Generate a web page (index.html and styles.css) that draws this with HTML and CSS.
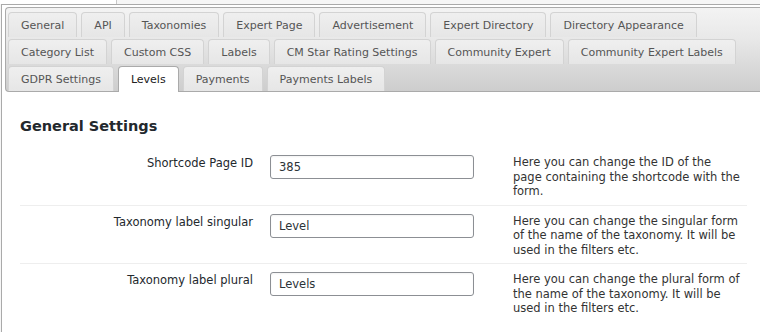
FILE: index.html
```html
<!DOCTYPE html>
<html>
<head>
<meta charset="utf-8">
<link rel="stylesheet" href="styles.css">
</head>
<body>
<div class="topbar"><div class="topbox"></div></div>
<div class="tabs">
  <ul class="nav">
    <li class="tab">General</li>
    <li class="tab">API</li>
    <li class="tab">Taxonomies</li>
    <li class="tab">Expert Page</li>
    <li class="tab">Advertisement</li>
    <li class="tab">Expert Directory</li>
    <li class="tab">Directory Appearance</li>
    <li class="tab">Category List</li>
    <li class="tab">Custom CSS</li>
    <li class="tab">Labels</li>
    <li class="tab">CM Star Rating Settings</li>
    <li class="tab">Community Expert</li>
    <li class="tab">Community Expert Labels</li>
    <li class="tab">GDPR Settings</li>
    <li class="tab active">Levels</li>
    <li class="tab">Payments</li>
    <li class="tab">Payments Labels</li>
  </ul>
  <div class="panel">
    <h3 class="heading">General Settings</h3>
    <div class="form">
      <div class="row">
        <div class="label">Shortcode Page ID</div>
        <div class="field"><input class="input" type="text" value="385"></div>
        <div class="desc">Here you can change the ID of the page containing the shortcode with the form.</div>
      </div>
      <div class="row">
        <div class="label">Taxonomy label singular</div>
        <div class="field"><input class="input" type="text" value="Level"></div>
        <div class="desc">Here you can change the singular form of the name of the taxonomy. It will be used in the filters etc.</div>
      </div>
      <div class="row">
        <div class="label">Taxonomy label plural</div>
        <div class="field"><input class="input" type="text" value="Levels"></div>
        <div class="desc">Here you can change the plural form of the name of the taxonomy. It will be used in the filters etc.</div>
      </div>
    </div>
  </div>
</div>
</body>
</html>
```

FILE: styles.css
```css
html, body {
  margin: 0;
  padding: 0;
  background: #f6f6f6;
  font-family: "DejaVu Sans", Verdana, sans-serif;
  overflow: hidden;
}
.topbar {
  height: 4px;
  display: flex;
}
.topbox {
  width: 116px;
  height: 4px;
  background: #fff;
  border-right: 1px solid #c8c8c8;
}
.tabs {
  margin-left: 1px;
  border: 1px solid #aaa;
  border-right: none;
  background: #fff;
  padding: 2px 0 0 3px;
  height: 340px;
}
.nav {
  list-style: none;
  margin: 0;
  padding: 4px 0 0 2px;
  border: 1px solid #aaa;
  border-right: none;
  border-radius: 4px 0 0 4px;
  background: linear-gradient(#f3f3f3, #e9e9e9 35%, #cdcdcd);
  display: flex;
  flex-wrap: wrap;
  align-items: flex-start;
  column-gap: 4px;
  row-gap: 2px;
}
.tab {
  font-size: 11px;
  line-height: 13px;
  color: #555;
  padding: 5.5px 12px;
  border: 1px solid #d3d3d3;
  border-bottom: none;
  border-radius: 4px 4px 0 0;
  background: linear-gradient(#efefef, #e6e6e6);
}
.tab.active {
  background: #fff;
  border-color: #aaa;
  color: #212121;
  padding-bottom: 6.5px;
  margin-bottom: -1px;
}
.panel {
  padding: 0 0 0 15px;
}
.heading {
  margin: 26px 0 12px;
  font-size: 14.5px;
  line-height: 17px;
  font-weight: bold;
  color: #23282d;
}
.form {
  width: 727px;
}
.row {
  display: grid;
  grid-template-columns: 250px 243px 229px;
  padding: 8px 0 6px;
  font-size: 11.5px;
  line-height: 14.5px;
  color: #23282d;
}
.row + .row {
  border-top: 1px solid #eee;
}
.label {
  text-align: right;
  padding-right: 17px;
  padding-top: 1px;
}
.input {
  box-sizing: border-box;
  width: 204px;
  height: 24px;
  margin: 0;
  padding: 0 8px;
  border: 1px solid #8c8f94;
  border-radius: 3px;
  font-family: "DejaVu Sans", Verdana, sans-serif;
  font-size: 11.5px;
  color: #2c3338;
  background: #fff;
  box-shadow: inset 0 1px 2px rgba(0,0,0,0.05);
}
.desc {
  color: #333;
}
```
